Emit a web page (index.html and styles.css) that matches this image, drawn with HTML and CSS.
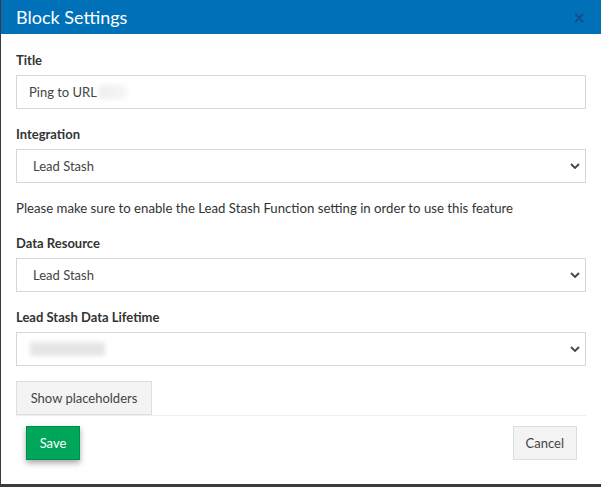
FILE: index.html
```
<!DOCTYPE html>
<html>
<head>
<meta charset="utf-8">
<link rel="stylesheet" href="styles.css">
</head>
<body>
<div class="modal">
  <div class="modal-header">
    <h1 class="modal-title">Block Settings</h1>
    <span class="close">&times;</span>
  </div>
  <div class="modal-body">
    <div class="field">
      <label class="label">Title</label>
      <div class="input"><span>Ping to URL</span><span class="blur blur-short"></span></div>
    </div>
    <div class="field">
      <label class="label">Integration</label>
      <div class="select"><span>Lead Stash</span><svg class="chev" viewBox="0 0 10 6" width="10" height="6"><path d="M1 1 L5 5 L9 1" fill="none" stroke="#444" stroke-width="1.8"/></svg></div>
    </div>
    <p class="note">Please make sure to enable the Lead Stash Function setting in order to use this feature</p>
    <div class="field">
      <label class="label">Data Resource</label>
      <div class="select"><span>Lead Stash</span><svg class="chev" viewBox="0 0 10 6" width="10" height="6"><path d="M1 1 L5 5 L9 1" fill="none" stroke="#444" stroke-width="1.8"/></svg></div>
    </div>
    <div class="field field-last">
      <label class="label">Lead Stash Data Lifetime</label>
      <div class="select"><span class="blur blur-long"></span><svg class="chev" viewBox="0 0 10 6" width="10" height="6"><path d="M1 1 L5 5 L9 1" fill="none" stroke="#444" stroke-width="1.8"/></svg></div>
    </div>
    <button class="btn btn-default btn-wide">Show placeholders</button>
  </div>
  <div class="modal-footer">
    <button class="btn btn-save">Save</button>
    <button class="btn btn-default">Cancel</button>
  </div>
</div>
</body>
</html>
```
FILE: styles.css
```
* { box-sizing: border-box; }
html, body { margin: 0; padding: 0; }
body {
  background: #3b3b3b;
  width: 601px;
  height: 487px;
  overflow: hidden;
  font-family: "Lato", "Liberation Sans", sans-serif;
  color: #333;
}
.modal {
  margin-left: 1px;
  width: 600px;
  height: 484px;
  background: #fff;
  display: flex;
  flex-direction: column;
}
.modal-header {
  height: 34px;
  background: #0071b8;
  display: flex;
  align-items: center;
  justify-content: space-between;
  padding: 0 16px 0 15px;
}
.modal-title {
  margin: 0;
  font-size: 18px;
  font-weight: 400;
  color: #fff;
}
.close {
  color: #0b5286;
  font-size: 20px;
  font-weight: 700;
  line-height: 1;
}
.modal-body {
  padding: 18px 15px 0 15px;
}
.field { margin-bottom: 17px; }
.field-last { margin-bottom: 15px; }
.label {
  display: block;
  font-size: 13px;
  line-height: 16px;
  font-weight: 700;
  margin-bottom: 7px;
  color: #333;
}
.input, .select {
  height: 34px;
  border: 1px solid #d5d5de;
  display: flex;
  align-items: center;
  font-size: 13px;
  color: #444;
  background: #fff;
}
.input { padding-left: 12px; }
.select { padding-left: 16px; padding-right: 5px; }
.select .chev { margin-left: auto; }
.blur {
  display: inline-block;
  height: 14px;
  background: linear-gradient(90deg, #eee, #f6f6f6);
  filter: blur(2px);
}
.blur-short { width: 28px; margin-left: 2px; }
.blur-long { width: 75px; margin-left: -3px; background: #e6e6e6; }
.note {
  font-size: 13.2px;
  line-height: 16px;
  margin: 0 0 19px 0;
  color: #333;
}
.btn {
  font-family: inherit;
  font-size: 13px;
  height: 34px;
  padding: 0 12px;
  border: 1px solid #ddd;
  background: #f3f3f3;
  color: #444;
  display: block;
}
.btn-wide { padding: 0 13px; width: 136px; }
.modal-footer {
  margin: 0 15px;
  border-top: 1px solid #eee;
  padding: 10px 9px 0 10px;
  display: flex;
  justify-content: space-between;
}
.btn-save {
  background: #00a65a;
  border-color: #008d4c;
  color: #fff;
  width: 54px;
  box-shadow: 0 3px 6px rgba(0,0,0,0.35);
}
```
